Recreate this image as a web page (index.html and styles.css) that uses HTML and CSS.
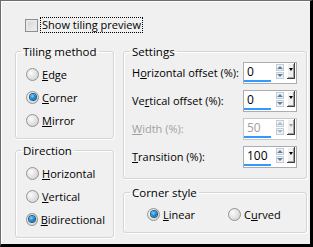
FILE: index.html
```html
<!DOCTYPE html>
<html lang="en">
<head>
    <meta charset="UTF-8">
    <title>Tiling</title>
    <link rel="stylesheet" href="styles.css">
</head>
<body>
    <div class="dialog">
        <div class="preview">
            <span class="check"></span>
            <span class="focus">Show tiling preview</span>
        </div>

        <div class="columns">
            <div class="col-left">
                <fieldset class="group method">
                    <legend>Tiling method</legend>
                    <div class="radio"><span class="dot"></span><span><u>E</u>dge</span></div>
                    <div class="radio"><span class="dot on"></span><span><u>C</u>orner</span></div>
                    <div class="radio"><span class="dot"></span><span><u>M</u>irror</span></div>
                </fieldset>

                <fieldset class="group direction">
                    <legend>Direction</legend>
                    <div class="radio"><span class="dot"></span><span><u>H</u>orizontal</span></div>
                    <div class="radio"><span class="dot"></span><span><u>V</u>ertical</span></div>
                    <div class="radio"><span class="dot on"></span><span><u>B</u>idirectional</span></div>
                </fieldset>
            </div>

            <div class="col-right">
                <fieldset class="group settings">
                    <legend>Settings</legend>
                    <div class="row">
                        <span class="label">H<u>o</u>rizontal offset (%):</span>
                        <div class="spin">
                            <span class="val">0</span>
                            <span class="arrows"><i class="up"></i><i class="down"></i></span>
                            <span class="drop"></span>
                        </div>
                    </div>
                    <div class="row">
                        <span class="label">Ve<u>r</u>tical offset (%):</span>
                        <div class="spin">
                            <span class="val">0</span>
                            <span class="arrows"><i class="up"></i><i class="down"></i></span>
                            <span class="drop"></span>
                        </div>
                    </div>
                    <div class="row disabled">
                        <span class="label"><u>W</u>idth (%):</span>
                        <div class="spin">
                            <span class="val">50</span>
                            <span class="arrows"><i class="up"></i><i class="down"></i></span>
                            <span class="drop"></span>
                        </div>
                    </div>
                    <div class="row">
                        <span class="label"><u>T</u>ransition (%):</span>
                        <div class="spin">
                            <span class="val">100</span>
                            <span class="arrows"><i class="up"></i><i class="down"></i></span>
                            <span class="drop"></span>
                        </div>
                    </div>
                </fieldset>

                <fieldset class="group corner">
                    <legend>Corner style</legend>
                    <div class="inline">
                        <div class="radio"><span class="dot on"></span><span><u>L</u>inear</span></div>
                        <div class="radio"><span class="dot"></span><span>C<u>u</u>rved</span></div>
                    </div>
                </fieldset>
            </div>
        </div>
    </div>
</body>
</html>
```

FILE: styles.css
```css
* {
    box-sizing: border-box;
}

body {
    margin: 0;
    font-family: 'Open Sans', 'Liberation Sans', sans-serif;
    font-size: 11px;
    color: #000;
}

.dialog {
    width: 313px;
    height: 247px;
    background: #f0f0f0;
    border-top: 1px solid #6d6d6d;
    border-left: 1px solid #6d6d6d;
    border-right: 3px solid #000;
    border-bottom: 3px solid #000;
    box-shadow: inset 1px 1px 0 #fff;
    padding: 16px 0 0 14px;
}

u {
    text-decoration: underline;
    text-underline-offset: 1px;
}

/* top checkbox */
.preview {
    display: flex;
    align-items: center;
    height: 16px;
    padding-left: 10px;
}

.check {
    width: 13px;
    height: 13px;
    border: 1px solid #8e8f8f;
    background: linear-gradient(135deg, #cfcfcf, #f4f4f4);
    box-shadow: inset 0 0 0 2px #e8e8e8;
    margin-right: 2px;
}

.focus {
    border: 1px dotted #000;
    padding: 0 1px;
    line-height: 14px;
}

/* columns */
.columns {
    display: flex;
    gap: 9px;
    margin-top: 11px;
}

.col-left {
    width: 99px;
    display: flex;
    flex-direction: column;
    gap: 4px;
}

.col-right {
    width: 184px;
    display: flex;
    flex-direction: column;
    gap: 6px;
}

.group {
    margin: 0;
    padding: 0 8px;
    border: 1px solid #d5d5d5;
    border-radius: 3px;
    box-shadow: inset 1px 1px 0 #fff, 1px 1px 0 #fff;
    min-width: 0;
}

.group legend {
    padding: 0 2px;
    margin-left: -3px;
    line-height: 15px;
    font-size: 11.5px;
}

.settings legend {
    margin-left: -2px;
}

.method,
.direction {
    padding-top: 7px;
    padding-bottom: 10px;
    display: flex;
    flex-direction: column;
    gap: 7px;
}

.method .radio,
.direction .radio {
    height: 16px;
}

/* radio buttons */
.radio {
    display: flex;
    align-items: center;
    padding-left: 2px;
}

.dot {
    width: 13px;
    height: 13px;
    border-radius: 50%;
    border: 1px solid #939393;
    background: radial-gradient(circle at 35% 35%, #fbfbfb, #d6d6d6 75%);
    margin-right: 3px;
    display: flex;
    align-items: center;
    justify-content: center;
}

.dot.on::after {
    content: '';
    width: 6px;
    height: 6px;
    border-radius: 50%;
    background: radial-gradient(circle at 40% 35%, #7cd3ff, #1a7ac4 55%, #0b4b86);
    box-shadow: 0 0 0 1px #1b5f94;
}

/* settings rows */
.settings {
    padding-top: 3px;
    padding-bottom: 10px;
    display: flex;
    flex-direction: column;
    gap: 6px;
}

.row {
    display: flex;
    align-items: center;
    height: 22px;
}

.row .label {
    width: 111px;
    white-space: nowrap;
    position: relative;
    top: -1px;
}

.spin {
    width: 54px;
    height: 22px;
    background: #fff;
    border: 1px solid #abadb3;
    display: flex;
    align-items: flex-start;
}

.val {
    width: 27px;
    height: 19px;
    padding-left: 3px;
    line-height: 17px;
    border-bottom: 2px solid #3399ff;
    font-size: 12px;
}

.arrows {
    display: flex;
    flex-direction: column;
    margin-left: 5px;
    margin-top: 1px;
    gap: 1px;
}

.arrows i {
    width: 8px;
    height: 7px;
    border: 1px solid #c6cdd6;
    background: #eef2f7;
    display: flex;
    align-items: center;
    justify-content: center;
}

.arrows i::after {
    content: '';
    border-left: 3px solid transparent;
    border-right: 3px solid transparent;
}

.arrows .up::after {
    border-bottom: 3px solid #5b7ea4;
}

.arrows .down::after {
    border-top: 3px solid #5b7ea4;
}

.drop {
    width: 8px;
    height: 16px;
    margin-left: 3px;
    background: #f0f0f0;
    border-right: 1px solid #404040;
    border-bottom: 1px solid #404040;
    box-shadow: inset 1px 1px 0 #fff, inset -1px -1px 0 #a0a0a0;
    display: flex;
    justify-content: center;
    padding-top: 5px;
}

.drop::after {
    content: '';
    width: 0;
    height: 0;
    border-left: 2px solid transparent;
    border-right: 2px solid transparent;
    border-top: 3px solid #000;
}

.disabled .label,
.disabled .val {
    color: #a0a0a0;
}

.disabled .arrows i::after {
    opacity: 0.5;
}

.disabled .drop::after {
    border-top-color: #a0a0a0;
}

.disabled .spin {
    border-color: #c8c8c8;
}

/* corner style */
.corner {
    padding: 6px 0 10px 0;
}

.corner legend {
    margin-left: 6px;
}

.inline {
    display: flex;
    gap: 31px;
    height: 16px;
    align-items: center;
    padding-left: 21px;
}
```
